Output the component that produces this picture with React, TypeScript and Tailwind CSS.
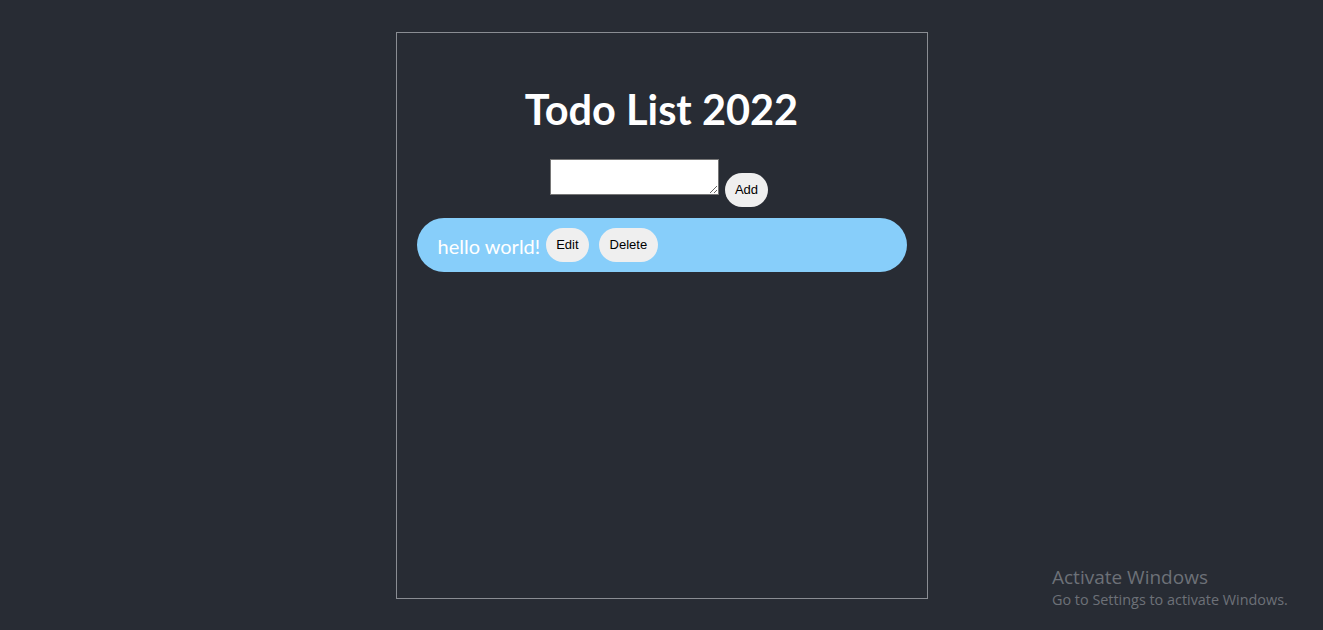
import { useState } from "react";

export default function App() {
  const [todos] = useState<string[]>(["hello world!"]);

  return (
    <main className="min-h-screen bg-[#282c34] pt-8 relative" style={{ minHeight: 630 }}>
      <section className="mx-auto w-[532px] h-[567px] border border-[#8a8d93] px-5">
        <h1 className="mt-[50px] text-center text-white font-bold text-[41.5px] leading-[52px] font-['Lato','Open_Sans',sans-serif]">
          Todo List 2022
        </h1>

        <div className="mt-[24px] pr-[5px] flex justify-center items-start gap-[6px]">
          <textarea className="w-[169px] h-[36px] bg-white border border-[#767676] outline-none resize-y" />
          <button className="mt-[14px] h-[34px] px-[10px] rounded-full bg-[#efefef] text-black text-[13px] font-['Liberation_Sans',Arial,sans-serif]">
            Add
          </button>
        </div>

        <ul className="mt-[11px] flex flex-col gap-3">
          {todos.map((t) => (
            <li
              key={t}
              className="h-[54px] rounded-full bg-[#87cefa] flex items-center pl-[21px]"
            >
              <span className="text-white text-[20px] font-['Lato','Open_Sans',sans-serif] mr-[6px] mt-[2px]">
                {t}
              </span>
              <button className="h-[34px] px-[10px] rounded-full bg-[#efefef] text-black text-[13px] font-['Liberation_Sans',Arial,sans-serif]">
                Edit
              </button>
              <button className="ml-[10px] h-[34px] px-[11px] rounded-full bg-[#efefef] text-black text-[13px] font-['Liberation_Sans',Arial,sans-serif]">
                Delete
              </button>
            </li>
          ))}
        </ul>
      </section>

      <div className="absolute left-[1052px] top-[566px] text-[#6d7178] font-['Open_Sans',sans-serif] leading-tight">
        <p className="text-[19px]">Activate Windows</p>
        <p className="text-[14.4px] mt-[1px]">Go to Settings to activate Windows.</p>
      </div>
    </main>
  );
}
